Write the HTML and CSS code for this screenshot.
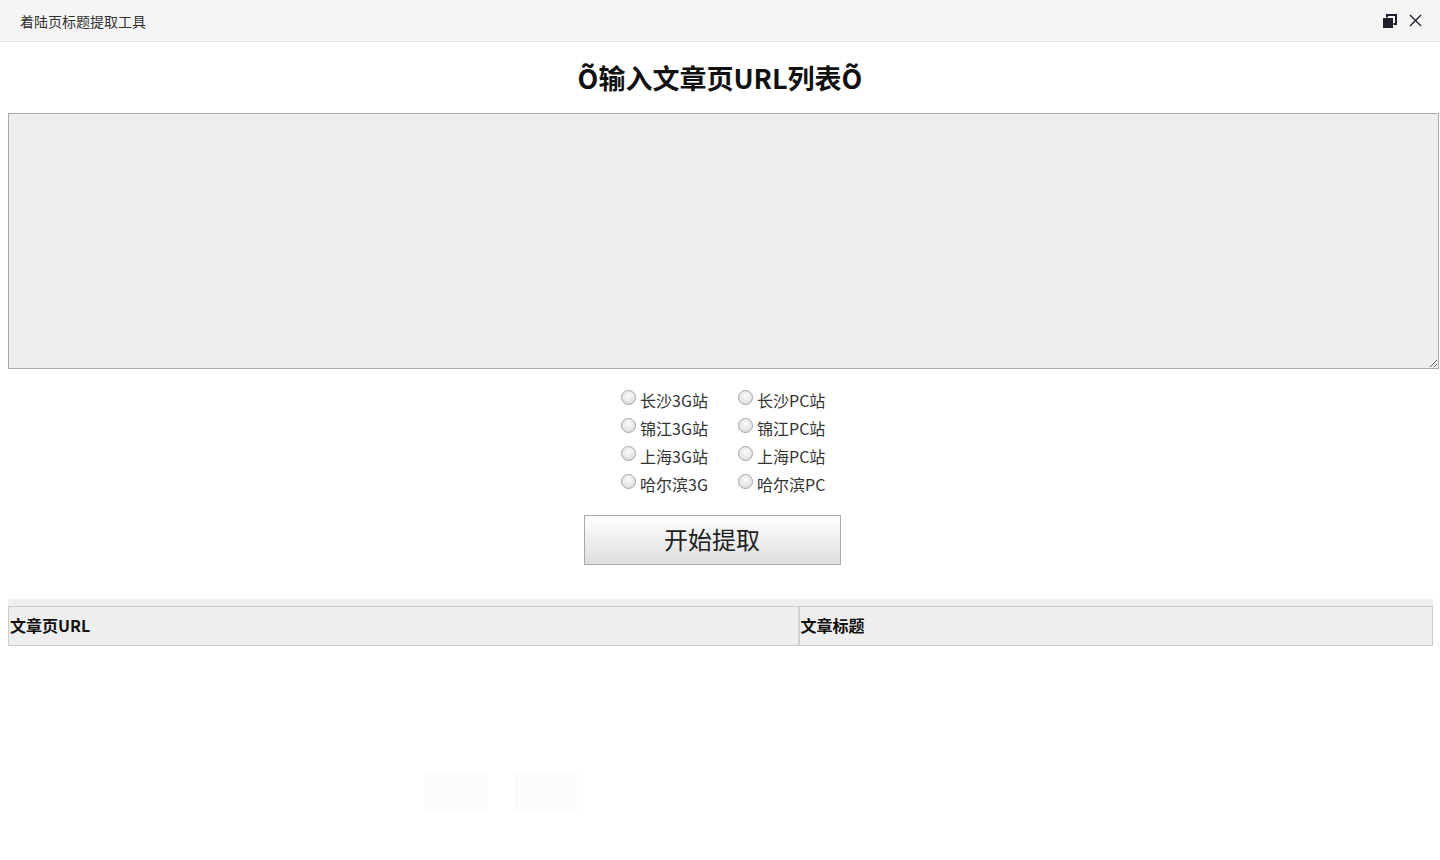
FILE: index.html
```html
<!DOCTYPE html>
<html lang="zh-CN">
<head>
<meta charset="utf-8">
<title>着陆页标题提取工具</title>
<link rel="stylesheet" href="styles.css">
</head>
<body>
<header class="titlebar">
  <span class="app-title">着陆页标题提取工具</span>
  <div class="win-controls">
    <span class="win-btn">
      <svg width="14" height="14" viewBox="0 0 14 14">
        <path d="M4 3.5 V1 H13 V10 H10.5" fill="none" stroke="#1f1f2e" stroke-width="2"/>
        <rect x="0" y="4" width="10" height="10" fill="#1f1f2e"/>
      </svg>
    </span>
    <span class="win-btn">
      <svg width="13" height="13" viewBox="0 0 13 13">
        <path d="M1 1 L12 12 M12 1 L1 12" stroke="#1f1f2e" stroke-width="1.4" fill="none"/>
      </svg>
    </span>
  </div>
</header>
<main class="content">
  <h1 class="heading">Õ输入文章页URL列表Õ</h1>
  <textarea class="url-input"></textarea>
  <div class="radio-row">
    <div class="radio-grid">
      <label class="opt"><input type="radio" name="site"><span>长沙3G站</span></label>
      <label class="opt"><input type="radio" name="site"><span>长沙PC站</span></label>
      <label class="opt"><input type="radio" name="site"><span>锦江3G站</span></label>
      <label class="opt"><input type="radio" name="site"><span>锦江PC站</span></label>
      <label class="opt"><input type="radio" name="site"><span>上海3G站</span></label>
      <label class="opt"><input type="radio" name="site"><span>上海PC站</span></label>
      <label class="opt"><input type="radio" name="site"><span>哈尔滨3G</span></label>
      <label class="opt"><input type="radio" name="site"><span>哈尔滨PC</span></label>
    </div>
  </div>
  <div class="btn-row">
    <button class="start-btn">开始提取</button>
  </div>
  <div class="table-wrap">
    <div class="table-strip"></div>
    <table class="result-table">
      <thead>
        <tr><th class="col-url">文章页URL</th><th class="col-title">文章标题</th></tr>
      </thead>
    </table>
  </div>
  <div class="ghost-row">
    <span class="ghost"></span><span class="ghost"></span>
  </div>
</main>
</body>
</html>
```

FILE: styles.css
```css
* { box-sizing: border-box; }
html, body {
  margin: 0;
  padding: 0;
  background: #ffffff;
  font-family: "Noto Sans CJK SC", "Noto Sans", sans-serif;
  color: #222;
}
.titlebar {
  height: 42px;
  background: #f5f5f5;
  border-bottom: 1px solid #e6e6e6;
  display: flex;
  align-items: center;
  justify-content: space-between;
  padding: 0 18px 0 20px;
}
.app-title {
  font-size: 14px;
  color: #333;
  line-height: 1;
}
.win-controls {
  display: flex;
  align-items: center;
  gap: 12px;
}
.win-btn {
  display: flex;
  align-items: center;
}
.content {
  padding: 0 1px 0 8px;
}
.heading {
  margin: 18px 0 0;
  padding-right: 7px;
  text-align: center;
  font-size: 27px;
  font-weight: bold;
  line-height: 36px;
  color: #111;
}
.url-input {
  display: block;
  width: 100%;
  height: 256px;
  margin-top: 17px;
  background: #eeeeee;
  border: 1px solid #a9a9a9;
  resize: both;
  font-family: inherit;
}
.radio-row {
  display: flex;
  justify-content: center;
  margin-top: 17px;
}
.radio-grid {
  display: grid;
  grid-template-columns: 117px 88px;
  grid-auto-rows: 28px;
}
.opt {
  display: flex;
  align-items: center;
  font-size: 16px;
  color: #333;
}
.opt input {
  appearance: none;
  -webkit-appearance: none;
  width: 15px;
  height: 15px;
  margin: -5px 4px 0 0;
  border-radius: 50%;
  border: 1px solid #a4a4a4;
  background: radial-gradient(circle at 50% 35%, #fafafa 0%, #e6e6e6 60%, #d2d2d2 100%);
}
.btn-row {
  display: flex;
  justify-content: center;
  padding-right: 23px;
  margin-top: 17px;
}
.start-btn {
  width: 257px;
  height: 50px;
  border: 1px solid #a8a8a8;
  border-radius: 0;
  background: linear-gradient(#ffffff, #dedede);
  font-family: inherit;
  font-size: 24px;
  line-height: 1;
  color: #222;
  padding: 0 0 3px;
}
.table-wrap {
  margin-top: 34px;
  width: 1425px;
}
.table-strip {
  height: 7px;
  background: #eeeeee;
}
.result-table {
  width: 100%;
  border-collapse: collapse;
  background: #eeeeee;
}
.result-table th {
  height: 39px;
  text-align: left;
  font-size: 16px;
  font-weight: bold;
  color: #111;
  padding: 0 1px 2px;
  border-top: 1px solid #cccccc;
  border-bottom: 1px solid #cccccc;
}
.col-url {
  width: 790px;
  border-left: 1px solid #cccccc;
}
.col-title {
  border-left: 2px solid #d0d0d0;
  border-right: 1px solid #cccccc;
}
.ghost-row {
  display: flex;
  gap: 26px;
  padding-left: 417px;
  margin-top: 126px;
}
.ghost {
  width: 63px;
  height: 41px;
  background: #fcfcfc;
}
```
